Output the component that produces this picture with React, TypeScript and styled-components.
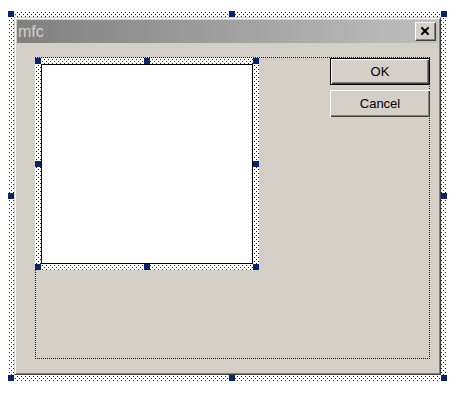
import { createGlobalStyle, styled } from "styled-components";

type Pos = "start" | "mid" | "end";

const GlobalStyle = createGlobalStyle`
  html, body {
    margin: 0;
    padding: 0;
    background: #fff;
  }
  body {
    font-family: "Liberation Sans", Arial, sans-serif;
  }
`;

// 1px navy dots, staggered, for the resize hatch round a selected control
const hatch =
  "url(\"data:image/svg+xml,%3Csvg xmlns='http://www.w3.org/2000/svg' width='4' height='4' shape-rendering='crispEdges'%3E%3Crect x='1' y='1' width='1' height='1' fill='%230a246a'/%3E%3Crect x='3' y='3' width='1' height='1' fill='%230a246a'/%3E%3C/svg%3E\")";

const place = (p: Pos) =>
  p === "start" ? "0" : p === "mid" ? "calc(50% - 3px)" : "calc(100% - 6px)";

const Canvas = styled.div`
  width: 459px;
  height: 397px;
  padding: 11px 0 0 8px;
  box-sizing: border-box;
  background: #fff;
`;

const SelectionFrame = styled.div<{ $midShift?: number }>`
  position: relative;
  display: flex;
  flex-shrink: 0;
  width: fit-content;
  padding: 6px;
  background-color: #fff;
  background-image: ${hatch};
  background-size: 4px 4px;
`;

const Handle = styled.span<{ $x: Pos; $y: Pos; $shift: number }>`
  position: absolute;
  left: ${(p) => (p.$x === "mid" ? `calc(50% - 3px + ${p.$shift}px)` : place(p.$x))};
  top: ${(p) => place(p.$y)};
  width: 6px;
  height: 6px;
  background: #0a246a;
`;

const Window = styled.div`
  width: 427px;
  height: 358px;
  box-sizing: border-box;
  display: flex;
  flex-direction: column;
  padding: 2px;
  background: #d4d0c8;
  border: 1px solid;
  border-color: #d4d0c8 #404040 #404040 #d4d0c8;
  box-shadow: inset 1px 1px #fff, inset -1px -1px #808080;
`;

const TitleBar = styled.div`
  height: 23px;
  display: flex;
  align-items: center;
  justify-content: space-between;
  padding: 0 2px 0 1px;
  background: linear-gradient(to right, #808080, #c0c0c0);
`;

const Title = styled.span`
  color: #d4d0c8;
  font-size: 16px;
  line-height: 23px;
`;

const CloseButton = styled.div`
  width: 21px;
  height: 19px;
  box-sizing: border-box;
  display: flex;
  align-items: center;
  justify-content: center;
  padding: 0 1px 2px 0;
  background: #d4d0c8;
  border: 1px solid;
  border-color: #fff #404040 #404040 #fff;
  box-shadow: inset -1px -1px #808080;
`;

const Body = styled.div`
  flex: 1;
  padding: 14px 8px 13px 18px;
`;

const Guide = styled.div`
  width: 395px;
  height: 302px;
  box-sizing: border-box;
  display: flex;
  justify-content: space-between;
  align-items: flex-start;
  border: 1px dotted #0000ff;
`;

const PictureSlot = styled.div`
  margin-left: -1px;
`;

const Picture = styled.div`
  width: 212px;
  height: 200px;
  box-sizing: border-box;
  border: 1px solid #000;
  background: #fff;
`;

const ButtonColumn = styled.div`
  display: flex;
  flex-direction: column;
  gap: 5px;
  margin-right: -1px;
`;

const PushButton = styled.button<{ $default?: boolean }>`
  width: 100px;
  height: 27px;
  padding: 0;
  box-sizing: border-box;
  font-family: "Liberation Sans", Arial, sans-serif;
  font-size: 13px;
  color: #000;
  background: #d4d0c8;
  border: ${(p) => (p.$default ? "1px solid #000" : "none")};
  box-shadow: inset 1px 1px #fff, inset -1px -1px #404040, inset -2px -2px #808080;
`;

const corners: [Pos, Pos][] = [
  ["start", "start"],
  ["mid", "start"],
  ["end", "start"],
  ["start", "mid"],
  ["end", "mid"],
  ["start", "end"],
  ["mid", "end"],
  ["end", "end"],
];

const Handles = ({ shift = 0 }: { shift?: number }) => (
  <>
    {corners.map(([x, y]) => (
      <Handle key={x + y} $x={x} $y={y} $shift={shift} />
    ))}
  </>
);

export default function App() {
  return (
    <Canvas>
      <GlobalStyle />
      <SelectionFrame>
        <Window>
          <TitleBar>
            <Title>mfc</Title>
            <CloseButton>
              <svg width="8" height="8" viewBox="0 0 8 8">
                <path d="M1 1 L7 7 M7 1 L1 7" stroke="#000" strokeWidth="2" strokeLinecap="square" />
              </svg>
            </CloseButton>
          </TitleBar>
          <Body>
            <Guide>
              <PictureSlot>
                <SelectionFrame>
                  <Picture />
                  <Handles />
                </SelectionFrame>
              </PictureSlot>
              <ButtonColumn>
                <PushButton $default>OK</PushButton>
                <PushButton>Cancel</PushButton>
              </ButtonColumn>
            </Guide>
          </Body>
        </Window>
        <Handles shift={4} />
      </SelectionFrame>
    </Canvas>
  );
}
